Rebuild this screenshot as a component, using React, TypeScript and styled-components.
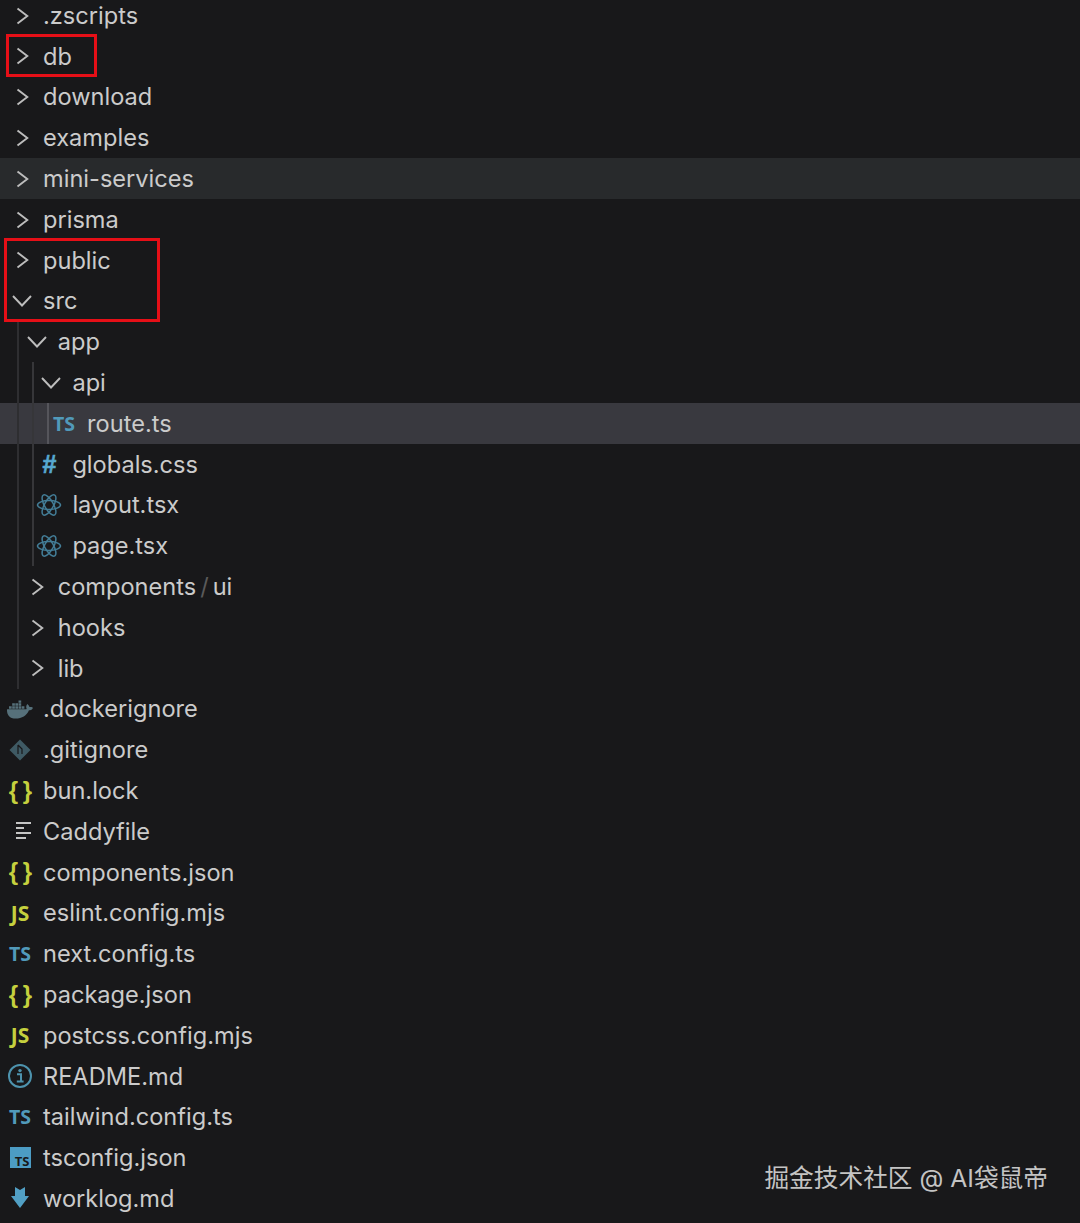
import React from 'react';
import styled, { createGlobalStyle } from 'styled-components';
import { FaDocker } from 'react-icons/fa';

const GlobalStyle = createGlobalStyle`
  html, body {
    margin: 0;
    padding: 0;
    background: #18181a;
  }
`;

const Page = styled.div`
  position: relative;
  width: 1080px;
  height: 1223px;
  overflow: hidden;
  background: #18181a;
  font-family: Inter, 'Liberation Sans', sans-serif;
`;

const Tree = styled.div`
  display: flex;
  flex-direction: column;
  margin-top: -4.8px;
`;

const Branch = styled.div<{ $depth: number }>`
  position: relative;
  display: flex;
  flex-direction: column;

  &::before {
    content: '';
    position: absolute;
    top: 0;
    bottom: 0;
    left: ${(p) => 2 + p.$depth * 15}px;
    width: 2px;
    background: ${(p) => (p.$depth > 2 ? '#55555b' : p.$depth > 1 ? '#363639' : '#2e2e31')};
    z-index: 1;
  }
`;

const Marked = styled.div<{ $width: number; $left: number }>`
  position: relative;
  display: flex;
  flex-direction: column;

  &::after {
    content: '';
    position: absolute;
    top: -2px;
    bottom: 0;
    left: ${(p) => p.$left}px;
    width: ${(p) => p.$width}px;
    box-sizing: border-box;
    border: 3px solid #e60f17;
  }
`;

const Row = styled.div<{ $depth: number; $tone?: 'hover' | 'selected' }>`
  display: flex;
  align-items: center;
  height: 40.8px;
  flex: none;
  padding-left: ${(p) => 7 + p.$depth * 14.7}px;
  background: ${(p) =>
    p.$tone === 'selected' ? '#39393f' : p.$tone === 'hover' ? '#282a2c' : 'transparent'};
`;

const IconSlot = styled.span`
  display: flex;
  align-items: center;
  justify-content: center;
  flex: none;
  width: 26px;
  height: 26px;
  margin-right: 10px;
`;

const Label = styled.span`
  font-size: 23.6px;
  line-height: 1;
  color: #cbcbcb;
  white-space: nowrap;
`;

const Slash = styled.span`
  color: #5a5a5a;
  margin: 0 4px;
`;

const LetterIcon = styled.span<{ $color: string; $size: number }>`
  font-family: 'Open Sans', sans-serif;
  font-weight: 700;
  font-size: ${(p) => p.$size}px;
  line-height: 1;
  color: ${(p) => p.$color};
  white-space: nowrap;
`;

const BraceIcon = styled.span`
  font-family: 'Liberation Sans', sans-serif;
  font-size: 24px;
  font-weight: 700;
  line-height: 1;
  letter-spacing: -1px;
  color: #c5d03e;
  white-space: nowrap;
`;

const HashIcon = styled.span`
  font-family: 'Liberation Sans', sans-serif;
  font-size: 25px;
  font-weight: 700;
  line-height: 1;
  color: #57a8d0;
  -webkit-text-stroke: 0.6px #57a8d0;
`;

const TsBadge = styled.span`
  display: flex;
  align-items: flex-end;
  justify-content: flex-end;
  width: 21px;
  height: 21px;
  background: #4c9cc4;
  font-family: 'Open Sans', sans-serif;
  font-weight: 700;
  font-size: 13px;
  line-height: 1;
  color: #18181a;
  padding: 0 1px 0 0;
  box-sizing: border-box;
`;

const Watermark = styled.div`
  position: absolute;
  right: 32px;
  bottom: 29px;
  font-family: Inter, 'Noto Sans CJK SC', sans-serif;
  font-size: 24.7px;
  line-height: 32px;
  color: #c4c4c4;
  white-space: nowrap;
`;

const Chevron = ({ open }: { open?: boolean }) => (
  <svg width="26" height="26" viewBox="0 0 26 26" fill="none">
    <path
      d={open ? 'M6 8 L15 17.5 L24 8' : 'M10.5 5.5 L20.3 13 L10.5 20.5'}
      stroke="#bdbdbd"
      strokeWidth="1.9"
    />
  </svg>
);

const AtomIcon = () => (
  <svg width="26" height="26" viewBox="0 0 26 26" fill="none" stroke="#437d97" strokeWidth="1.5">
    <ellipse cx="13" cy="13" rx="11.5" ry="4.4" />
    <ellipse cx="13" cy="13" rx="11.5" ry="4.4" transform="rotate(60 13 13)" />
    <ellipse cx="13" cy="13" rx="11.5" ry="4.4" transform="rotate(120 13 13)" />
  </svg>
);

const GitIcon = () => (
  <svg width="26" height="26" viewBox="0 0 26 26">
    <path d="M13 2.5 L23.5 13 L13 23.5 L2.5 13 Z" fill="#3f5a64" />
    <path d="M11 8 L15 12 V17 M11 8 V17" stroke="#18181a" strokeWidth="1.2" fill="none" />
  </svg>
);

const LinesIcon = () => (
  <svg width="26" height="26" viewBox="0 0 26 26" fill="none" stroke="#c5c5c5" strokeWidth="2">
    <path d="M9 4 H24 M9 9 H17 M9 14 H24 M9 19 H19" />
  </svg>
);

const InfoIcon = () => (
  <svg width="26" height="26" viewBox="0 0 26 26" fill="none">
    <circle cx="13" cy="13" r="11" stroke="#4d93ae" strokeWidth="2" />
    <circle cx="13" cy="7.6" r="1.7" fill="#4d93ae" />
    <path d="M10 11.2 H14 V18 M9.8 18.6 H16.6" stroke="#4d93ae" strokeWidth="2" />
  </svg>
);

const ArrowIcon = () => (
  <svg width="26" height="26" viewBox="0 0 26 26">
    <path d="M8 1 L13 4 L18 1 V10 H22 L13 22 L4 10 H8 Z" fill="#519fc4" />
  </svg>
);

type IconKind =
  | 'closed' | 'open' | 'ts' | 'js' | 'json' | 'hash' | 'atom'
  | 'docker' | 'git' | 'lines' | 'info' | 'tsbox' | 'arrow';

const renderIcon = (kind: IconKind) => {
  switch (kind) {
    case 'closed':
      return <Chevron />;
    case 'open':
      return <Chevron open />;
    case 'ts':
      return <LetterIcon $color="#519aba" $size={19.5}>TS</LetterIcon>;
    case 'js':
      return <LetterIcon $color="#c5d03e" $size={21}>JS</LetterIcon>;
    case 'json':
      return <BraceIcon>{'{ }'}</BraceIcon>;
    case 'hash':
      return <HashIcon>#</HashIcon>;
    case 'atom':
      return <AtomIcon />;
    case 'docker':
      return <FaDocker size={27} color="#56707a" />;
    case 'git':
      return <GitIcon />;
    case 'lines':
      return <LinesIcon />;
    case 'info':
      return <InfoIcon />;
    case 'tsbox':
      return <TsBadge>TS</TsBadge>;
    case 'arrow':
      return <ArrowIcon />;
  }
};

type Entry = {
  name: string;
  suffix?: string;
  icon: IconKind;
  tone?: 'hover' | 'selected';
  children?: Entry[];
};

const head: Entry[] = [{ name: '.zscripts', icon: 'closed' }];
const dbEntry: Entry[] = [{ name: 'db', icon: 'closed' }];
const middle: Entry[] = [
  { name: 'download', icon: 'closed' },
  { name: 'examples', icon: 'closed' },
  { name: 'mini-services', icon: 'closed', tone: 'hover' },
  { name: 'prisma', icon: 'closed' },
];
const publicEntry: Entry[] = [
  { name: 'public', icon: 'closed' },
  { name: 'src', icon: 'open' },
];
const srcChildren: Entry[] = [
  {
    name: 'app',
    icon: 'open',
    children: [
      {
        name: 'api',
        icon: 'open',
        children: [{ name: 'route.ts', icon: 'ts', tone: 'selected' }],
      },
      { name: 'globals.css', icon: 'hash' },
      { name: 'layout.tsx', icon: 'atom' },
      { name: 'page.tsx', icon: 'atom' },
    ],
  },
  { name: 'components', suffix: 'ui', icon: 'closed' },
  { name: 'hooks', icon: 'closed' },
  { name: 'lib', icon: 'closed' },
];
const files: Entry[] = [
  { name: '.dockerignore', icon: 'docker' },
  { name: '.gitignore', icon: 'git' },
  { name: 'bun.lock', icon: 'json' },
  { name: 'Caddyfile', icon: 'lines' },
  { name: 'components.json', icon: 'json' },
  { name: 'eslint.config.mjs', icon: 'js' },
  { name: 'next.config.ts', icon: 'ts' },
  { name: 'package.json', icon: 'json' },
  { name: 'postcss.config.mjs', icon: 'js' },
  { name: 'README.md', icon: 'info' },
  { name: 'tailwind.config.ts', icon: 'ts' },
  { name: 'tsconfig.json', icon: 'tsbox' },
  { name: 'worklog.md', icon: 'arrow' },
];

const Items = ({ items, depth = 0 }: { items: Entry[]; depth?: number }) => (
  <>
    {items.map((entry) => (
      <React.Fragment key={entry.name}>
        <Row $depth={depth} $tone={entry.tone}>
          <IconSlot>{renderIcon(entry.icon)}</IconSlot>
          <Label>
            {entry.name}
            {entry.suffix && (
              <>
                <Slash>/</Slash>
                {entry.suffix}
              </>
            )}
          </Label>
        </Row>
        {entry.children && (
          <Branch $depth={depth + 1}>
            <Items items={entry.children} depth={depth + 1} />
          </Branch>
        )}
      </React.Fragment>
    ))}
  </>
);

function App() {
  return (
    <>
      <GlobalStyle />
      <Page>
        <Tree>
          <Items items={head} />
          <Marked $left={6} $width={91}>
            <Items items={dbEntry} />
          </Marked>
          <Items items={middle} />
          <Marked $left={4} $width={156}>
            <Items items={publicEntry} />
          </Marked>
          <Branch $depth={1}>
            <Items items={srcChildren} depth={1} />
          </Branch>
          <Items items={files} />
        </Tree>
        <Watermark>掘金技术社区 @ AI袋鼠帝</Watermark>
      </Page>
    </>
  );
}

export default App;
